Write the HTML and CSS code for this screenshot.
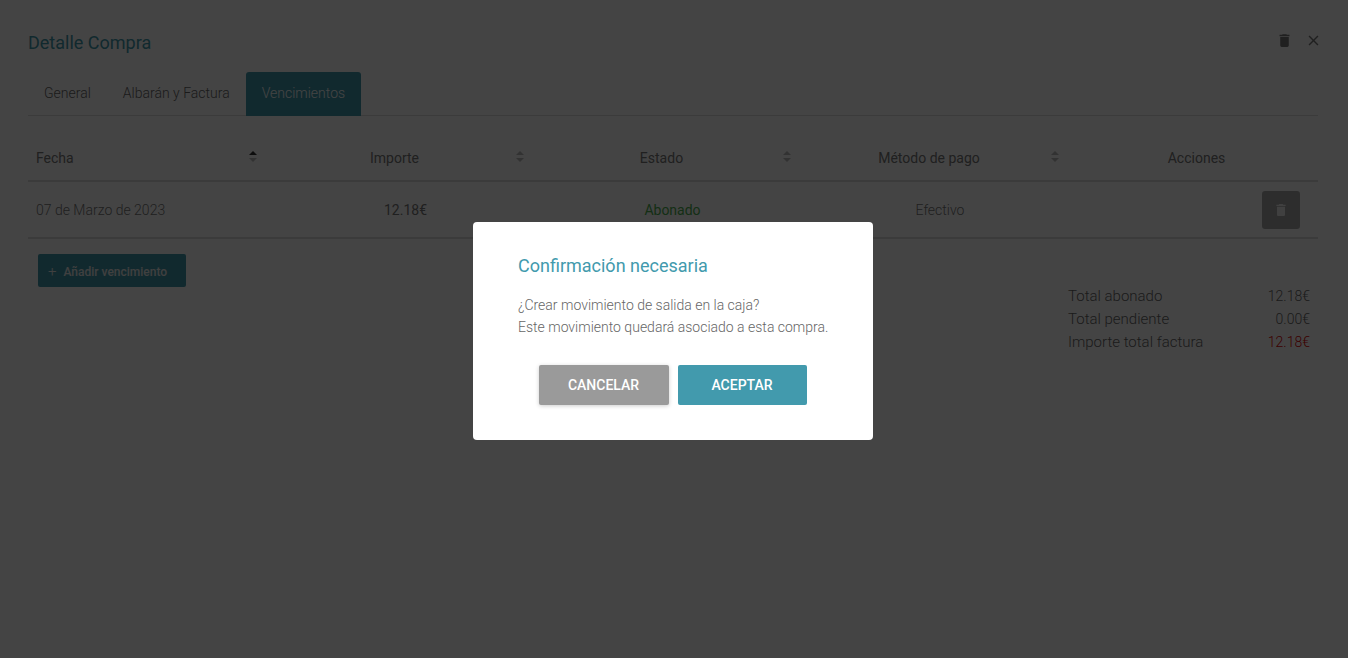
FILE: index.html
```html
<!DOCTYPE html>
<html lang="es">
<head>
<meta charset="utf-8">
<title>Detalle Compra</title>
<link rel="stylesheet" href="styles.css">
</head>
<body>
<main class="page">
  <header class="head">
    <h1 class="title">Detalle Compra</h1>
    <div class="head-icons">
      <svg class="ico" viewBox="0 0 24 24"><path d="M6 19c0 1.1.9 2 2 2h8c1.100 0 2-.9 2-2V7H6v12zM19 4h-3.500l-1-1h-5l-1 1H5v2h14V4z"/></svg>
      <svg class="ico" viewBox="0 0 24 24"><path d="M19 6.410L17.590 5 12 10.590 6.410 5 5 6.410 10.590 12 5 17.590 6.410 19 12 13.410 17.590 19 19 17.590 13.410 12z"/></svg>
    </div>
  </header>
  <nav class="tabs">
    <span class="tab">General</span>
    <span class="tab">Albarán y Factura</span>
    <span class="tab tab-active">Vencimientos</span>
  </nav>
  <section class="table">
    <div class="row row-head">
      <div class="cell cell-left">Fecha<span class="sort"><i class="up up-on"></i><i class="down"></i></span></div>
      <div class="cell">Importe<span class="sort"><i class="up"></i><i class="down"></i></span></div>
      <div class="cell">Estado<span class="sort"><i class="up"></i><i class="down"></i></span></div>
      <div class="cell">Método de pago<span class="sort"><i class="up"></i><i class="down"></i></span></div>
      <div class="cell cell-actions">Acciones</div>
    </div>
    <div class="row row-data">
      <div class="cell cell-left">07 de Marzo de 2023</div>
      <div class="cell cell-data cell-num">12.18€</div>
      <div class="cell cell-data cell-ok">Abonado</div>
      <div class="cell cell-data">Efectivo</div>
      <div class="cell cell-btn">
        <button class="icon-btn" type="button"><svg class="ico-btn" viewBox="0 0 24 24"><path d="M6 19c0 1.100.9 2 2 2h8c1.100 0 2-.9 2-2V7H6v12zM19 4h-3.500l-1-1h-5l-1 1H5v2h14V4z"/></svg></button>
      </div>
    </div>
  </section>
  <button class="add" type="button"><span class="plus">+</span>Añadir vencimiento</button>
  <section class="totals">
    <div class="total"><span>Total abonado</span><span class="val">12.18€</span></div>
    <div class="total"><span>Total pendiente</span><span class="val">0.00€</span></div>
    <div class="total"><span>Importe total factura</span><span class="val val-red">12.18€</span></div>
  </section>
</main>
<div class="overlay">
  <div class="modal">
    <h2 class="modal-title">Confirmación necesaria</h2>
    <p class="modal-text">¿Crear movimiento de salida en la caja?<br>Este movimiento quedará asociado a esta compra.</p>
    <div class="modal-actions">
      <button class="btn btn-cancel" type="button">CANCELAR</button>
      <button class="btn btn-ok" type="button">ACEPTAR</button>
    </div>
  </div>
</div>
</body>
</html>
```
FILE: styles.css
```css
* { box-sizing: border-box; }
html, body { margin: 0; height: 100%; overflow: hidden; }
body { background: #fff; font-family: Roboto, "Liberation Sans", sans-serif; color: #777; }
.page { padding: 32px 30px 0 28px; }
.head { display: flex; justify-content: space-between; align-items: center; height: 22px; }
.title { margin: 0; font-size: 18px; font-weight: 400; line-height: 22px; color: #429aad; }
.head-icons { display: flex; gap: 12px; margin-right: -4px; margin-top: -5px; }
.ico { width: 17px; height: 17px; fill: #777; display: block; }
.tabs { display: flex; margin-top: 18px; height: 44px; border-bottom: 1px solid #ddd; }
.tab { padding: 0 16px; font-size: 14px; font-weight: 300; line-height: 42px; height: 44px; color: #666; border-radius: 3px 3px 0 0; }
.tab-active { background: #429aad; color: #fff; }
.table { margin-top: 22px; }
.row { display: grid; grid-template-columns: 233px 267px 267px 268px 255px; }
.row-head { height: 44px; border-bottom: 2px solid #ddd; align-items: center; padding-bottom: 3px; }
.row-data { height: 57px; border-bottom: 2px solid #ddd; align-items: center; }
.cell { position: relative; font-size: 14px; text-align: center; color: #777; }
.row-head .cell { font-weight: 400; }
.row-data .cell { font-weight: 300; }
.cell-left { text-align: left; padding-left: 8px; }
.cell-data { padding-left: 22px; }
.row-data .cell-num { font-weight: 400; }
.row-data .cell-ok { color: #4caf50; font-weight: 400; }
.cell-actions { padding-left: 12px; }
.cell-btn { display: flex; justify-content: flex-end; padding-right: 18px; }
.icon-btn { width: 38px; height: 38px; padding: 0; border: 0; border-radius: 3px; background: #aaa; display: flex; align-items: center; justify-content: center; }
.ico-btn { width: 16px; height: 16px; fill: #eee; }
.sort { position: absolute; right: 3px; top: 1px; width: 10px; display: flex; flex-direction: column; gap: 3px; align-items: center; }
.sort i { display: block; width: 0; height: 0; border-left: 4px solid transparent; border-right: 4px solid transparent; }
.up { border-bottom: 4px solid #bbb; }
.up-on { border-bottom-color: #333; }
.down { border-top: 4px solid #bbb; }
.add { display: block; margin: 15px 0 0 10px; width: 148px; height: 33px; padding: 0 0 0 10px; border: 0; border-radius: 2px; background: #429aad; color: #eee; font-family: inherit; font-size: 12px; font-weight: 500; text-align: left; }
.plus { font-size: 15px; font-weight: 300; margin-right: 7px; }
.totals { margin: -2px 8px 0 auto; width: 242px; }
.total { display: flex; justify-content: space-between; font-size: 15px; font-weight: 300; line-height: 23px; color: #666; }
.val { font-size: 14px; }
.val-red { color: #e00000; }
.overlay { position: fixed; inset: 0; background: rgba(0, 0, 0, .735); display: flex; justify-content: center; align-items: flex-start; padding: 222px 2px 0 0; }
.modal { width: 400px; height: 218px; padding: 33px 45px 0; background: #fff; border-radius: 4px; }
.modal-title { margin: 0; font-size: 18px; font-weight: 400; line-height: 22px; color: #429aad; }
.modal-text { margin: 17px 0 0; font-size: 14px; font-weight: 300; line-height: 22px; color: #666; white-space: nowrap; }
.modal-actions { display: flex; justify-content: center; gap: 9px; margin: 27px 0 0 -1px; }
.btn { height: 40px; border: 0; border-radius: 2px; color: #fff; font-family: inherit; font-size: 14px; font-weight: 500; }
.btn-cancel { width: 130px; background: #9a9a9a; box-shadow: 0 1px 4px rgba(0, 0, 0, .2); }
.btn-ok { width: 129px; background: #429aad; }
```
